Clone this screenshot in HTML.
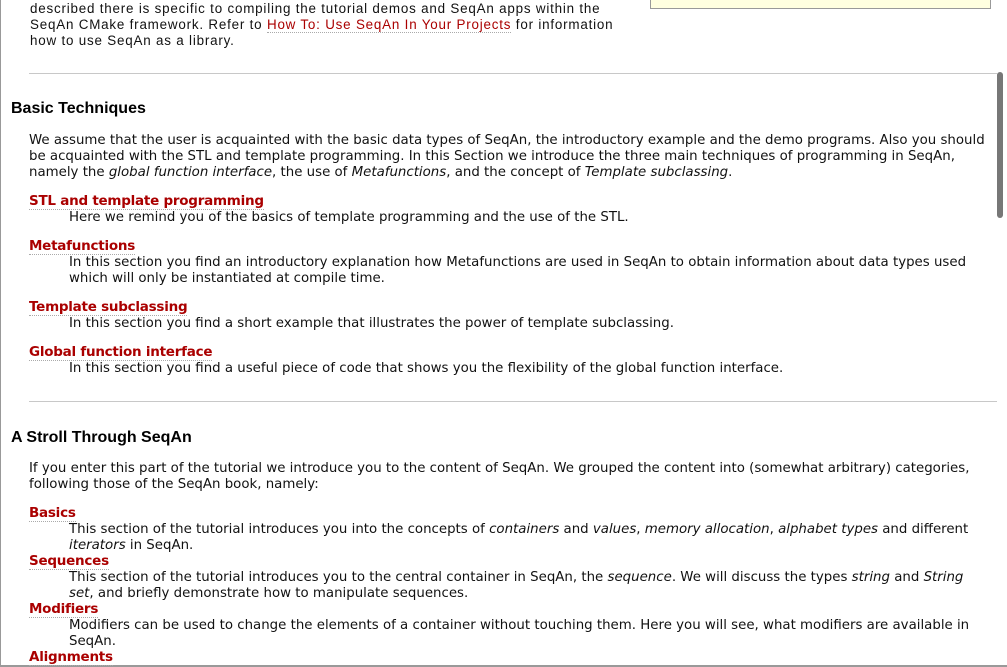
<!DOCTYPE html>
<html><head><meta charset="utf-8"><style>
body{margin:0;width:1007px;height:667px;overflow:hidden;background:#fff;position:relative;font-family:"DejaVu Sans","Liberation Sans",sans-serif;font-size:13.35px;color:#111}
.l{position:absolute;white-space:nowrap;line-height:16px;margin-top:2px}
.a{color:#a00;font-weight:bold;font-size:13.5px;letter-spacing:-0.25px;border-bottom:1px dotted #aaa}
.h{font-family:"Liberation Sans",sans-serif;font-weight:bold;font-size:16px;color:#000;margin-top:2px}
.t{font-family:"Liberation Sans",sans-serif;font-size:13.4px;letter-spacing:0.8px}
.hr{position:absolute;left:29px;width:968px;height:1px;background:#c8c8c8}
.r{color:#a00;border-bottom:1px dotted #aaa}
</style></head><body>
<div style="position:absolute;left:0;top:0;width:1px;height:667px;background:#999"></div>
<div style="position:absolute;left:0;top:665px;width:1007px;height:2px;background:#999"></div>
<div style="position:absolute;left:650px;top:-2px;width:339px;height:9px;background:#ffffe0;border:1px solid #999"></div>
<div style="position:absolute;left:997px;top:72px;width:6px;height:146px;background:#777;border-radius:3px"></div>
<div class="l t" style="left:30px;top:-1px">described there is specific to compiling the tutorial demos and SeqAn apps within the</div>
<div class="l t" style="left:30px;top:15px">SeqAn CMake framework. Refer to <span class="r">How To: Use SeqAn In Your Projects</span> for information</div>
<div class="l t" style="left:30px;top:31px">how to use SeqAn as a library.</div>
<div class="hr" style="top:73px"></div>
<div class="l h" style="left:11px;top:99px">Basic Techniques</div>
<div class="l" style="left:29px;top:131px">We assume that the user is acquainted with the basic data types of SeqAn, the introductory example and the demo programs. Also you should</div>
<div class="l" style="left:29px;top:147px">be acquainted with the STL and template programming. In this Section we introduce the three main techniques of programming in SeqAn,</div>
<div class="l" style="left:29px;top:163px">namely the <i>global function interface</i>, the use of <i>Metafunctions</i>, and the concept of <i>Template subclassing</i>.</div>
<div class="l a" style="left:29px;top:191px">STL and template programming</div>
<div class="l" style="left:69px;top:208px">Here we remind you of the basics of template programming and the use of the STL.</div>
<div class="l a" style="left:29px;top:236px">Metafunctions</div>
<div class="l" style="left:69px;top:253px">In this section you find an introductory explanation how Metafunctions are used in SeqAn to obtain information about data types used</div>
<div class="l" style="left:69px;top:269px">which will only be instantiated at compile time.</div>
<div class="l a" style="left:29px;top:297px">Template subclassing</div>
<div class="l" style="left:69px;top:314px">In this section you find a short example that illustrates the power of template subclassing.</div>
<div class="l a" style="left:29px;top:342px">Global function interface</div>
<div class="l" style="left:69px;top:359px">In this section you find a useful piece of code that shows you the flexibility of the global function interface.</div>
<div class="hr" style="top:401px"></div>
<div class="l h" style="left:11px;top:428px">A Stroll Through SeqAn</div>
<div class="l" style="left:29px;top:459px">If you enter this part of the tutorial we introduce you to the content of SeqAn. We grouped the content into (somewhat arbitrary) categories,</div>
<div class="l" style="left:29px;top:475px">following those of the SeqAn book, namely:</div>
<div class="l a" style="left:29px;top:503px">Basics</div>
<div class="l" style="left:69px;top:520px">This section of the tutorial introduces you into the concepts of <i>containers</i> and <i>values</i>, <i>memory allocation</i>, <i>alphabet types</i> and different</div>
<div class="l" style="left:69px;top:536px"><i>iterators</i> in SeqAn.</div>
<div class="l a" style="left:29px;top:551px">Sequences</div>
<div class="l" style="left:69px;top:568px">This section of the tutorial introduces you to the central container in SeqAn, the <i>sequence</i>. We will discuss the types <i>string</i> and <i>String</i></div>
<div class="l" style="left:69px;top:584px"><i>set</i>, and briefly demonstrate how to manipulate sequences.</div>
<div class="l a" style="left:29px;top:599px">Modifiers</div>
<div class="l" style="left:69px;top:616px">Modifiers can be used to change the elements of a container without touching them. Here you will see, what modifiers are available in</div>
<div class="l" style="left:69px;top:632px">SeqAn.</div>
<div class="l a" style="left:29px;top:647px">Alignments</div>
</body></html>
